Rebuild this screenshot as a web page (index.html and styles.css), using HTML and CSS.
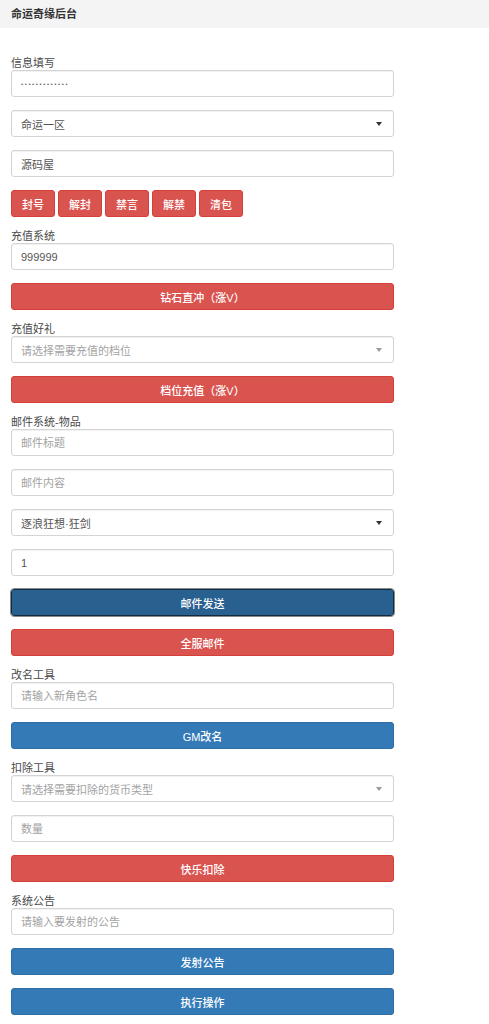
FILE: index.html
```html
<!DOCTYPE html>
<html lang="zh-CN">
<head>
<meta charset="utf-8">
<title>命运奇缘后台</title>
<link rel="stylesheet" href="styles.css">
</head>
<body>
<header class="topbar"><h1 class="title">命运奇缘后台</h1></header>
<main class="form">
  <div class="field">
    <label class="label">信息填写</label>
    <input class="control" type="password" value="abcdefghijklm">
  </div>
  <div class="select"><span class="select-text">命运一区</span><span class="caret"></span></div>
  <input class="control" type="text" value="源码屋">
  <div class="btn-row">
    <button class="btn btn-red btn-sm">封号</button>
    <button class="btn btn-red btn-sm">解封</button>
    <button class="btn btn-red btn-sm">禁言</button>
    <button class="btn btn-red btn-sm">解禁</button>
    <button class="btn btn-red btn-sm">清包</button>
  </div>
  <div class="field">
    <label class="label">充值系统</label>
    <input class="control" type="text" value="999999">
  </div>
  <button class="btn btn-red">钻石直冲（涨V）</button>
  <div class="field">
    <label class="label">充值好礼</label>
    <div class="select is-empty"><span class="select-text">请选择需要充值的档位</span><span class="caret"></span></div>
  </div>
  <button class="btn btn-red">档位充值（涨V）</button>
  <div class="field">
    <label class="label">邮件系统-物品</label>
    <input class="control" type="text" placeholder="邮件标题">
  </div>
  <input class="control" type="text" placeholder="邮件内容">
  <div class="select"><span class="select-text">逐浪狂想·狂剑</span><span class="caret"></span></div>
  <input class="control" type="text" value="1">
  <button class="btn btn-blue is-focus">邮件发送</button>
  <button class="btn btn-red">全服邮件</button>
  <div class="field">
    <label class="label">改名工具</label>
    <input class="control" type="text" placeholder="请输入新角色名">
  </div>
  <button class="btn btn-blue">GM改名</button>
  <div class="field">
    <label class="label">扣除工具</label>
    <div class="select is-empty"><span class="select-text">请选择需要扣除的货币类型</span><span class="caret"></span></div>
  </div>
  <input class="control" type="text" placeholder="数量">
  <button class="btn btn-red">快乐扣除</button>
  <div class="field">
    <label class="label">系统公告</label>
    <input class="control" type="text" placeholder="请输入要发射的公告">
  </div>
  <button class="btn btn-blue">发射公告</button>
  <button class="btn btn-blue">执行操作</button>
</main>
</body>
</html>
```

FILE: styles.css
```css
* { box-sizing: border-box; }
html, body { margin: 0; padding: 0; background: #fff; }
body {
  font-family: "Liberation Sans", "Noto Sans CJK SC", sans-serif;
  font-size: 11px;
  color: #333;
  width: 489px;
}
.topbar {
  height: 28px;
  background: #f4f4f4;
  display: flex;
  align-items: center;
  padding: 0 11px;
}
.title {
  margin: 0;
  font-size: 11px;
  font-weight: 700;
  color: #333;
  line-height: 14px;
}
.form {
  padding: 29px 0 0 11px;
  width: 394px;
  display: flex;
  flex-direction: column;
  gap: 13px;
}
.field { display: flex; flex-direction: column; }
.label {
  display: block;
  height: 13px;
  line-height: 12px;
  font-size: 11px;
  color: #4a4a4a;
}
.control, .select {
  display: block;
  width: 100%;
  height: 27px;
  margin: 0;
  border: 1px solid #d4d4d4;
  border-radius: 3px;
  background: #fff;
  box-shadow: inset 0 1px 1px rgba(0,0,0,.06);
  padding: 0 9px;
  font-family: inherit;
  font-size: 11px;
  color: #555;
  outline: none;
}
.control::placeholder { color: #a3a3a3; }
.control[type="password"] { letter-spacing: 1.6px; font-size: 6px; color: #666; }
.select {
  display: flex;
  align-items: center;
  justify-content: space-between;
  padding-right: 11px;
}
.select.is-empty .select-text { color: #a3a3a3; }
.caret {
  width: 0;
  height: 0;
  border-left: 3px solid transparent;
  border-right: 3px solid transparent;
  border-top: 4px solid #333;
}
.select.is-empty .caret { border-top-color: #9a9a9a; }
.btn-row { display: flex; gap: 3px; }
.btn {
  display: block;
  width: 100%;
  height: 27px;
  margin: 0;
  padding: 0;
  border: 1px solid transparent;
  border-radius: 3px;
  font-family: inherit;
  font-size: 11px;
  font-weight: 500;
  color: #fff;
  text-align: center;
  cursor: pointer;
}
.btn-sm { width: 44px; }
.btn-red { background: #d9534f; border-color: #d43f3a; }
.btn-blue { background: #337ab7; border-color: #2e6da4; }
.btn-blue.is-focus {
  background: #286090;
  border-color: #122b40;
  outline: 1px solid #8a8a8a;
}
```
